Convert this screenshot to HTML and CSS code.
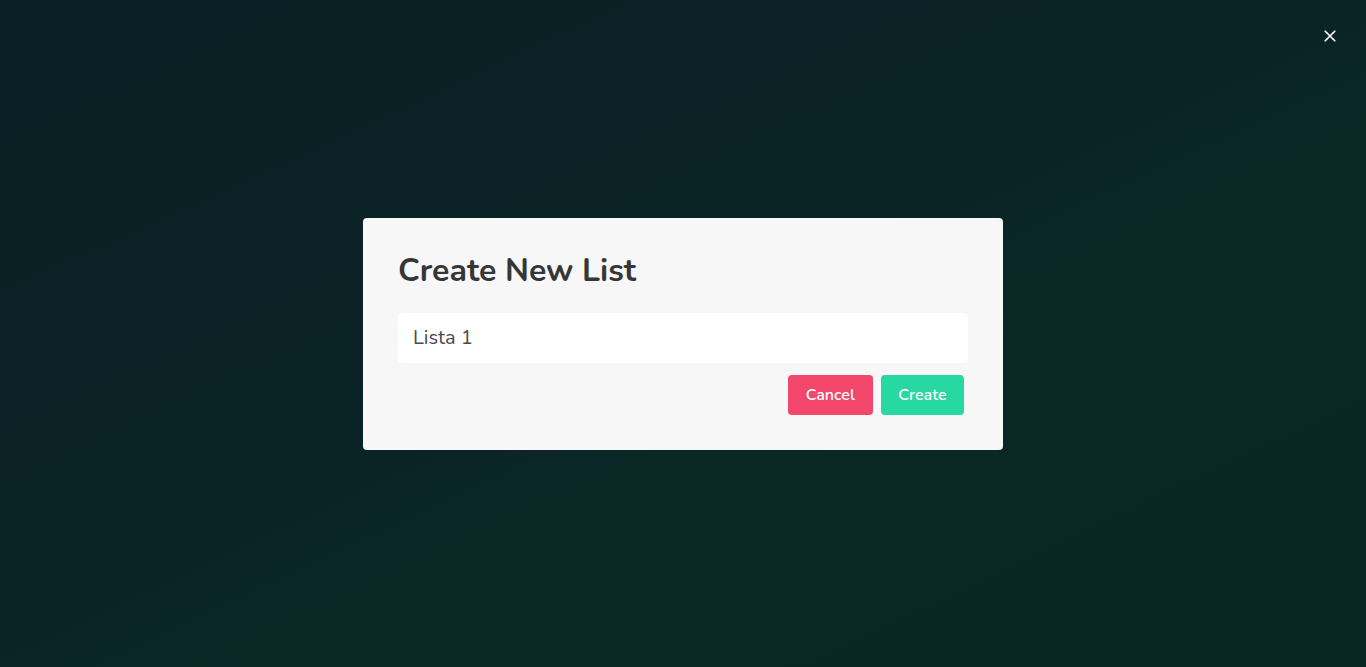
FILE: index.html
```html
<!DOCTYPE html>
<html lang="en">
<head>
<meta charset="utf-8">
<title>Create New List</title>
<link rel="stylesheet" href="styles.css">
</head>
<body>
<div class="backdrop">
  <div class="modal-card">
    <h1 class="title">Create New List</h1>
    <input class="input" type="text" value="Lista 1">
    <div class="actions">
      <button class="btn btn-danger">Cancel</button>
      <button class="btn btn-primary">Create</button>
    </div>
  </div>
  <button class="close" aria-label="close">
    <svg width="16" height="16" viewBox="0 0 16 16"><path d="M2 2 L14 14 M14 2 L2 14" stroke="#fff" stroke-width="2" stroke-linecap="butt"/></svg>
  </button>
</div>
</body>
</html>
```
FILE: styles.css
```css
html, body {
  margin: 0;
  padding: 0;
  height: 100%;
}
body {
  font-family: "Nunito", "Lato", "Noto Sans", sans-serif;
  background: linear-gradient(155deg, #0a2024 0%, #0a2325 45%, #0b2726 60%, #0a2622 100%);
}
.backdrop {
  position: relative;
  height: 100%;
  display: flex;
  align-items: center;
  justify-content: center;
}
.modal-card {
  width: 640px;
  box-sizing: border-box;
  padding: 35px;
  background: #f7f7f7;
  border-radius: 4px;
}
.title {
  margin: 0 0 24px 0;
  font-size: 32px;
  line-height: 36px;
  font-weight: 700;
  color: #363636;
}
.input {
  display: block;
  width: 100%;
  box-sizing: border-box;
  height: 50px;
  padding: 0 14px;
  border: 1px solid #fff;
  border-radius: 4px;
  background: #fff;
  font-family: inherit;
  font-size: 20px;
  color: #4a4a4a;
  outline: none;
}
.actions {
  display: flex;
  justify-content: flex-end;
  gap: 8px;
  margin-top: 12px;
  padding-right: 4px;
}
.btn {
  height: 40px;
  padding: 0 18px;
  border: none;
  border-radius: 4px;
  font-family: inherit;
  font-size: 16px;
  font-weight: 600;
  color: #fff;
  cursor: pointer;
}
.btn-danger {
  background: #f2466a;
}
.btn-primary {
  padding: 0 17.5px;
  background: #27d8a1;
}
.close {
  position: absolute;
  top: 20px;
  right: 20px;
  width: 32px;
  height: 32px;
  padding: 0;
  border: none;
  background: transparent;
  display: flex;
  align-items: center;
  justify-content: center;
}
.close svg {
  width: 14px;
  height: 14px;
}
```
